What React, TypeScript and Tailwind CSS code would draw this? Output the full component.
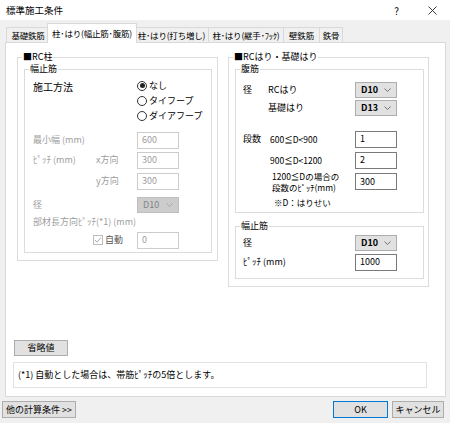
import React from "react";

function Field({ value, disabled }: { value: string; disabled?: boolean }) {
  return (
    <div
      className={`w-[42px] h-[17px] flex items-center pl-[4px] bg-white border text-[9px] ${
        disabled ? "border-[#cccccc] text-[#9d9d9d]" : "border-[#7a7a7a] text-black"
      }`}
    >
      {value}
    </div>
  );
}

function Combo({ value, disabled }: { value: string; disabled?: boolean }) {
  return (
    <div
      className={`w-[42px] h-[16px] flex items-center justify-between pl-[5px] pr-[5px] border text-[9px] ${
        disabled
          ? "bg-[#cccccc] border-[#bfbfbf] text-[#838383]"
          : "bg-[#e1e1e1] border-[#adadad] text-black font-semibold"
      }`}
    >
      <span>{value}</span>
      <svg width="7" height="4" viewBox="0 0 7 4">
        <polyline
          points="0.5,0.5 3.5,3.5 6.5,0.5"
          fill="none"
          stroke={disabled ? "#a0a0a0" : "#555555"}
          strokeWidth="0.8"
        />
      </svg>
    </div>
  );
}

function Group({
  label,
  className,
  children,
}: {
  label: string;
  className: string;
  children?: React.ReactNode;
}) {
  return (
    <div className={`relative border border-[#dcdcdc] ${className}`}>
      <span className="absolute left-[4px] -top-[7px] bg-white px-[1px] text-[9px] leading-[12px] text-black whitespace-nowrap">
        {label}
      </span>
      {children}
    </div>
  );
}

function Radio({ label, checked }: { label: string; checked?: boolean }) {
  return (
    <div className="h-[15px] flex items-center gap-[2px]">
      <span className="w-[10px] h-[10px] rounded-full border border-[#333333] bg-white flex items-center justify-center">
        {checked && <span className="w-[5px] h-[5px] rounded-full bg-[#222222]" />}
      </span>
      <span className="text-[9px] text-black">{label}</span>
    </div>
  );
}

const tabs = [
  { label: "基礎鉄筋", w: "w-[44px]" },
  { label: "柱･はり(幅止筋･腹筋)", w: "w-[90px]", active: true },
  { label: "柱･はり(打ち増し)", w: "w-[75px]" },
  { label: "柱･はり(継手･ﾌｯｸ)", w: "w-[76px]" },
  { label: "壁鉄筋", w: "w-[37px]" },
  { label: "鉄骨", w: "w-[24px]" },
];

export default function App() {
  return (
    <div className="w-[450px] h-[423px] bg-[#f0f0f0] flex flex-col overflow-hidden font-['Noto_Sans_CJK_JP',sans-serif] text-[9px] text-black">
      {/* title bar */}
      <div className="h-[20px] bg-white flex items-center pl-[6px] pr-[13px] shrink-0">
        <span className="text-[9.5px]">標準施工条件</span>
        <span className="ml-auto text-[10px] mr-[29px]">?</span>
        <svg width="9" height="9" viewBox="0 0 9 9">
          <line x1="0.5" y1="0.5" x2="8.5" y2="8.5" stroke="#222" strokeWidth="0.9" />
          <line x1="8.5" y1="0.5" x2="0.5" y2="8.5" stroke="#222" strokeWidth="0.9" />
        </svg>
      </div>

      {/* tabs */}
      <div className="h-[22px] flex items-end pl-[6px] shrink-0 relative z-10">
        {tabs.map((t, i) =>
          t.active ? (
            <div
              key={i}
              className={`${t.w} h-[20px] -mb-px -mx-[2px] -ml-[3px] bg-white border border-b-0 border-[#d9d9d9] flex items-center justify-center whitespace-nowrap text-[8.5px] tracking-[-0.2px] relative z-10`}
            >
              {t.label}
            </div>
          ) : (
            <div
              key={i}
              className={`${t.w} h-[15px] ${i === 0 ? "" : "-ml-px"} bg-[#f0f0f0] border border-b-0 border-[#d9d9d9] flex items-center justify-center whitespace-nowrap text-[8.5px] tracking-[-0.2px]`}
            >
              {t.label}
            </div>
          )
        )}
      </div>

      {/* panel */}
      <div className="ml-[5px] w-[441px] h-[355px] bg-white border border-[#d9d9d9] flex flex-col shrink-0">
        <div className="flex gap-[10px] pl-[11px] pt-[14px]">
          {/* left group */}
          <Group label="■RC柱" className="w-[201px] h-[204px] pt-[11px] pl-[6px]">
            <Group label="幅止筋" className="w-[188px] h-[184px] pl-[8px]">
              <div className="flex mt-[8px]">
                <div className="w-[104px] pt-[2px] text-[10px] leading-[14px]">施工方法</div>
                <div className="flex flex-col">
                  <Radio label="なし" checked />
                  <Radio label="タイフープ" />
                  <Radio label="ダイアフープ" />
                </div>
              </div>
              <div className="flex items-center mt-[9px] h-[16px] text-[#9d9d9d]">
                <div className="w-[104px]">最小幅 (mm)</div>
                <Field value="600" disabled />
              </div>
              <div className="flex items-center mt-[4px] h-[16px] text-[#9d9d9d]">
                <div className="w-[63px]">ﾋﾟｯﾁ (mm)</div>
                <div className="w-[41px]">x方向</div>
                <Field value="300" disabled />
              </div>
              <div className="flex items-center mt-[5px] h-[16px] text-[#9d9d9d]">
                <div className="w-[63px]" />
                <div className="w-[41px]">y方向</div>
                <Field value="300" disabled />
              </div>
              <div className="flex items-center mt-[8px] h-[16px] text-[#9d9d9d]">
                <div className="w-[104px]">径</div>
                <Combo value="D10" disabled />
              </div>
              <div className="flex items-center mt-[3px] h-[12px] text-[#9d9d9d] whitespace-nowrap">
                部材長方向ﾋﾟｯﾁ(*1) (mm)
              </div>
              <div className="flex items-center mt-[4px] h-[16px]">
                <div className="w-[60px]" />
                <div className="w-[44px] flex items-center gap-[2px]">
                  <span className="w-[10px] h-[10px] border border-[#bcbcbc] bg-white flex items-center justify-center">
                    <svg width="8" height="8" viewBox="0 0 8 8">
                      <polyline points="1,4 3,6.2 7,1.5" fill="none" stroke="#9d9d9d" strokeWidth="0.9" />
                    </svg>
                  </span>
                  <span className="text-[#555555]">自動</span>
                </div>
                <Field value="0" disabled />
              </div>
            </Group>
          </Group>

          {/* right group */}
          <Group label="■RCはり・基礎はり" className="w-[201px] h-[230px] pt-[11px] pl-[6px]">
            <Group label="腹筋" className="w-[189px] h-[144px] pl-[7px]">
              <div className="flex items-center mt-[12px] h-[16px]">
                <div className="w-[25px]">径</div>
                <div className="w-[87px]">RCはり</div>
                <Combo value="D10" />
              </div>
              <div className="flex items-center mt-[2px] h-[16px]">
                <div className="w-[25px]" />
                <div className="w-[87px]">基礎はり</div>
                <Combo value="D13" />
              </div>
              <div className="flex items-center mt-[15px] h-[16px]">
                <div className="w-[27px]">段数</div>
                <div className="w-[85px] text-[8.5px]">600≦D&lt;900</div>
                <Field value="1" />
              </div>
              <div className="flex items-center mt-[5px] h-[16px]">
                <div className="w-[27px]" />
                <div className="w-[85px] text-[8.5px]">900≦D&lt;1200</div>
                <Field value="2" />
              </div>
              <div className="flex items-start mt-[3px] h-[22px]">
                <div className="w-[29px]" />
                <div className="w-[83px] text-[8.5px] leading-[11px] whitespace-nowrap">
                  1200≦Dの場合の
                  <br />
                  段数のﾋﾟｯﾁ(mm)
                </div>
                <div className="mt-[2px]">
                  <Field value="300" />
                </div>
              </div>
              <div className="flex items-center mt-[3px] h-[12px]">
                <div className="w-[31px]" />
                <div className="text-[8.5px]">※D：はりせい</div>
              </div>
            </Group>
            <Group label="幅止筋" className="w-[189px] h-[53px] mt-[13px] pl-[7px]">
              <div className="flex items-center mt-[8px] h-[16px]">
                <div className="w-[112px]">径</div>
                <Combo value="D10" />
              </div>
              <div className="flex items-center mt-[3px] h-[16px]">
                <div className="w-[112px]">ﾋﾟｯﾁ (mm)</div>
                <Field value="1000" />
              </div>
            </Group>
          </Group>
        </div>

        {/* bottom of panel */}
        <div className="mt-auto pb-[8px]">
          <div className="ml-[8px] w-[54px] h-[16px] bg-[#e1e1e1] border border-[#adadad] flex items-center justify-center">
            省略値
          </div>
          <div className="ml-[7px] mt-[6px] w-[414px] h-[26px] bg-white border border-[#e3e3e3] flex items-center pl-[4px]">
            (*1) 自動とした場合は、帯筋ﾋﾟｯﾁの5倍とします。
          </div>
        </div>
      </div>

      {/* buttons */}
      <div className="flex items-center mt-[4px] pl-[2px] shrink-0">
        <div className="w-[74px] h-[17px] bg-[#e1e1e1] border border-[#adadad] flex items-center justify-center whitespace-nowrap">
          他の計算条件 &gt;&gt;
        </div>
        <div className="ml-auto w-[55px] h-[17px] bg-[#e1e1e1] border border-[#0078d7] flex items-center justify-center">
          OK
        </div>
        <div className="ml-[4px] mr-[6px] w-[52px] h-[17px] bg-[#e1e1e1] border border-[#adadad] flex items-center justify-center">
          キャンセル
        </div>
      </div>
    </div>
  );
}
